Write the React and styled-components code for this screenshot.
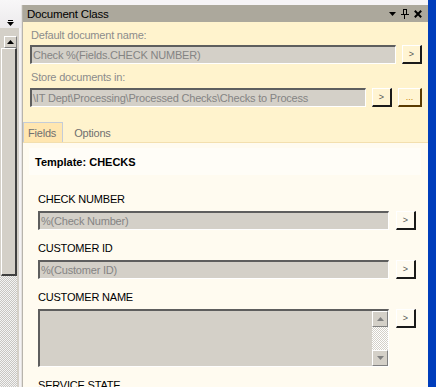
import React from "react";
import styled, { createGlobalStyle } from "styled-components";

const Global = createGlobalStyle`
  html, body { margin: 0; padding: 0; overflow: hidden; }
  body { font-family: "Liberation Sans", Arial, sans-serif; font-size: 11px; background: #f6f4f6; }
`;

const Screen = styled.div`
  display: flex;
  width: 436px;
  height: 387px;
  overflow: hidden;
  background: #f6f4f6;
`;

const LeftStrip = styled.div`
  width: 21px;
  display: flex;
  flex-direction: column;
  flex-shrink: 0;
`;

const TopCap = styled.div`
  height: 28px;
  flex-shrink: 0;
  background: linear-gradient(#f8f7f8, #eceaec);
  position: relative;
`;

const DropGlyph = styled.svg`
  position: absolute;
  left: 7px;
  top: 20px;
`;

const StripBody = styled.div`
  flex: 1;
  min-height: 0;
  display: flex;
  background: #d4d0c8;
`;

const ScrollColumn = styled.div`
  width: 17px;
  display: flex;
  flex-direction: column;
`;

const UpZone = styled.div`
  height: 20px;
  flex-shrink: 0;
  padding: 8px 0 0 4px;
  box-sizing: border-box;
  background: #d4d0c8;
`;

const MiniArrow = styled.div`
  width: 13px;
  height: 12px;
  box-sizing: border-box;
  background: #d4d0c8;
  border-top: 1px solid #fff;
  border-left: 1px solid #fff;
  border-right: 1px solid #808080;
  border-bottom: 1px solid #808080;
  display: flex;
  align-items: center;
  justify-content: center;
`;

const Thumb = styled.div`
  height: 228px;
  flex-shrink: 0;
  margin-left: 1px;
  box-sizing: border-box;
  background: #d4d0c8;
  border-top: 1px solid #fff;
  border-left: 1px solid #fff;
  border-right: 2px solid #404040;
  border-bottom: 2px solid #404040;
`;

const Checkered = styled.div`
  flex: 1;
  background-color: #fff;
  background-image: repeating-conic-gradient(#c8c6c2 0% 25%, #f4f4f4 0% 50%);
  background-size: 2px 2px;
`;

const StripEdge = styled.div`
  width: 4px;
  background: #d4d0c8;
  border-right: 2px solid #f4f2f4;
  box-sizing: border-box;
`;

const Divider = styled.div`
  width: 2px;
  flex-shrink: 0;
  margin-top: 5px;
  background: #e4e2e0;
  border-right: 1px solid #b8b4ac;
  box-sizing: border-box;
`;

const Panel = styled.div`
  flex: 1;
  margin-top: 5px;
  display: flex;
  flex-direction: column;
  min-width: 0;
  overflow: hidden;
`;

const BlueStrip = styled.div`
  width: 8px;
  flex-shrink: 0;
  background: #003dbc;
`;

const Header = styled.div`
  height: 17px;
  flex-shrink: 0;
  background: #aca89c;
  display: flex;
  align-items: center;
  padding: 0 6px 0 4px;
  color: #000;
  letter-spacing: -0.2px;
  font-size: 11.5px;
`;

const HeaderTitle = styled.span`
  flex: 1;
`;

const HeaderIcons = styled.div`
  display: flex;
  align-items: center;
  gap: 5px;
`;

const TopSection = styled.div`
  flex-shrink: 0;
  background: #fff3cd;
  padding: 7px 6px 0 7px;
  display: flex;
  flex-direction: column;
`;

const TopLabel = styled.div`
  height: 13px;
  line-height: 13px;
  margin: ${(p) => (p.$first ? "0" : "7px")} 0 ${(p) => p.$gap}px 1px;
  color: #8c8c8c;
  letter-spacing: -0.2px;
  font-size: 11px;
`;

const InputRow = styled.div`
  display: flex;
  flex-shrink: 0;
  gap: ${(p) => p.$gap || 6}px;
  align-items: flex-start;
`;

const Field = styled.div`
  flex: 1;
  height: ${(p) => p.$h || 19}px;
  box-sizing: border-box;
  background: #d4d0c8;
  border-top: 2px solid #5e5e5e;
  border-left: 2px solid #5e5e5e;
  border-right: 1px solid #fff;
  border-bottom: 1px solid #fff;
  color: #848484;
  padding-left: 1px;
  line-height: 16px;
  white-space: nowrap;
  overflow: hidden;
  letter-spacing: -0.2px;
  font-size: 11px;
  display: flex;
  position: relative;
`;

const Btn = styled.div`
  width: ${(p) => p.$w || 20}px;
  height: 19px;
  box-sizing: border-box;
  flex-shrink: 0;
  background: ${(p) => p.$bg || "#fff4d2"};
  border-top: 1px solid #fff;
  border-left: 1px solid #fff;
  border-right: 2px solid ${(p) => p.$edge || "#1a1a1a"};
  border-bottom: 2px solid ${(p) => p.$edge || "#1a1a1a"};
  color: ${(p) => p.$color || "#555"};
  font-size: 9px;
  display: flex;
  align-items: center;
  justify-content: center;
`;

const TabStrip = styled.div`
  margin: 15px -6px 0 -7px;
  height: 20px;
  flex-shrink: 0;
  display: flex;
  border-bottom: 1px solid #f3dfae;
`;

const Tab = styled.div`
  height: 20px;
  box-sizing: border-box;
  padding: 0 ${(p) => p.$pr}px 0 ${(p) => p.$pl}px;
  display: flex;
  align-items: center;
  color: #707070;
  letter-spacing: -0.2px;
  font-size: 11px;
  background: ${(p) => (p.$active ? "#ffe6b0" : "transparent")};
  border: 1px solid ${(p) => (p.$active ? "#c4ccd8" : "transparent")};
  border-bottom: none;
`;

const LowerSection = styled.div`
  flex: 1 0 auto;
  background: #fffbf0;
  padding: 5px 12px 0 15px;
  display: flex;
  flex-direction: column;
`;

const TemplateBox = styled.div`
  margin: 0 -5px 0 -9px;
  height: 27px;
  flex-shrink: 0;
  padding-left: 6px;
  display: flex;
  align-items: center;
  background: #fffdf7;
  font-weight: bold;
  color: #000;
  font-size: 11px;
`;

const FieldLabel = styled.div`
  height: 13px;
  flex-shrink: 0;
  line-height: 13px;
  margin: ${(p) => p.$mt}px 0 5px 0;
  color: #000;
  letter-spacing: -0.2px;
  font-size: 11px;
  white-space: nowrap;
`;

const InnerScroll = styled.div`
  position: absolute;
  right: 0;
  top: 0;
  bottom: 0;
  width: 16px;
  display: flex;
  flex-direction: column;
  background-color: #fff;
  background-image: repeating-conic-gradient(#d4d0c8 0% 25%, #ffffff 0% 50%);
  background-size: 2px 2px;
`;

const ScrollBtn = styled.div`
  height: 16px;
  flex-shrink: 0;
  box-sizing: border-box;
  background: #d4d0c8;
  border-top: 1px solid #fff;
  border-left: 1px solid #fff;
  border-right: 1px solid #808080;
  border-bottom: 1px solid #808080;
  display: flex;
  align-items: center;
  justify-content: center;
`;

const ScrollGap = styled.div`
  flex: 1;
`;

const Tri = ({ up, color = "#808080", w = 7 }) => (
  <svg width={w} height="4" viewBox="0 0 7 4">
    {up ? (
      <polygon points="3.5,0 7,4 0,4" fill={color} />
    ) : (
      <polygon points="0,0 7,0 3.5,4" fill={color} />
    )}
  </svg>
);

const FieldBlock = ({ label, value, mt, h }) => (
  <>
    <FieldLabel $mt={mt}>{label}</FieldLabel>
    <InputRow $gap={7}>
      <Field $h={h}>
        {value}
        {h && (
          <InnerScroll>
            <ScrollBtn>
              <Tri up />
            </ScrollBtn>
            <ScrollGap />
            <ScrollBtn>
              <Tri />
            </ScrollBtn>
          </InnerScroll>
        )}
      </Field>
      <Btn $bg="#fffbf0">&gt;</Btn>
    </InputRow>
  </>
);

export default function App() {
  return (
    <>
      <Global />
      <Screen>
        <LeftStrip>
          <TopCap>
            <DropGlyph width="7" height="7" viewBox="0 0 7 7">
              <rect x="1" y="0" width="5" height="1" fill="#000" />
              <polygon points="0,2 7,2 3.5,6" fill="#000" />
            </DropGlyph>
          </TopCap>
          <StripBody>
            <ScrollColumn>
              <UpZone>
                <MiniArrow>
                  <Tri up color="#000" />
                </MiniArrow>
              </UpZone>
              <Thumb />
              <Checkered />
            </ScrollColumn>
            <StripEdge />
          </StripBody>
        </LeftStrip>
        <Divider />
        <Panel>
          <Header>
            <HeaderTitle>Document Class</HeaderTitle>
            <HeaderIcons>
              <svg width="7" height="4" viewBox="0 0 7 4">
                <polygon points="0,0 7,0 3.5,4" fill="#000" />
              </svg>
              <svg width="8" height="10" viewBox="0 0 8 10">
                <rect x="2.5" y="0.5" width="3" height="5" fill="none" stroke="#000" />
                <rect x="5" y="0" width="1" height="6" fill="#000" />
                <rect x="0" y="5" width="8" height="1" fill="#000" />
                <rect x="3" y="6" width="1" height="4" fill="#000" />
              </svg>
              <svg width="8" height="8" viewBox="0 0 8 8">
                <path d="M0.8 0.8 L7.2 7.2 M7.2 0.8 L0.8 7.2" stroke="#000" strokeWidth="2" />
              </svg>
            </HeaderIcons>
          </Header>
          <TopSection>
            <TopLabel $first $gap={3}>Default document name:</TopLabel>
            <InputRow>
              <Field>Check %(Fields.CHECK NUMBER)</Field>
              <Btn>&gt;</Btn>
            </InputRow>
            <TopLabel $gap={4}>Store documents in:</TopLabel>
            <InputRow>
              <Field>\IT Dept\Processing\Processed Checks\Checks to Process</Field>
              <Btn>&gt;</Btn>
              <Btn $w={24} $edge="#5a3a00" $color="#c88000">...</Btn>
            </InputRow>
            <TabStrip>
              <Tab $active $pl={4} $pr={6}>Fields</Tab>
              <Tab $pl={10} $pr={8}>Options</Tab>
            </TabStrip>
          </TopSection>
          <LowerSection>
            <TemplateBox>Template: CHECKS</TemplateBox>
            <FieldBlock mt={18} label="CHECK NUMBER" value="%(Check Number)" />
            <FieldBlock mt={12} label="CUSTOMER ID" value="%(Customer ID)" />
            <FieldBlock mt={12} label="CUSTOMER NAME" value="" h={58} />
            <FieldLabel $mt={12}>SERVICE STATE</FieldLabel>
          </LowerSection>
        </Panel>
        <BlueStrip />
      </Screen>
    </>
  );
}
